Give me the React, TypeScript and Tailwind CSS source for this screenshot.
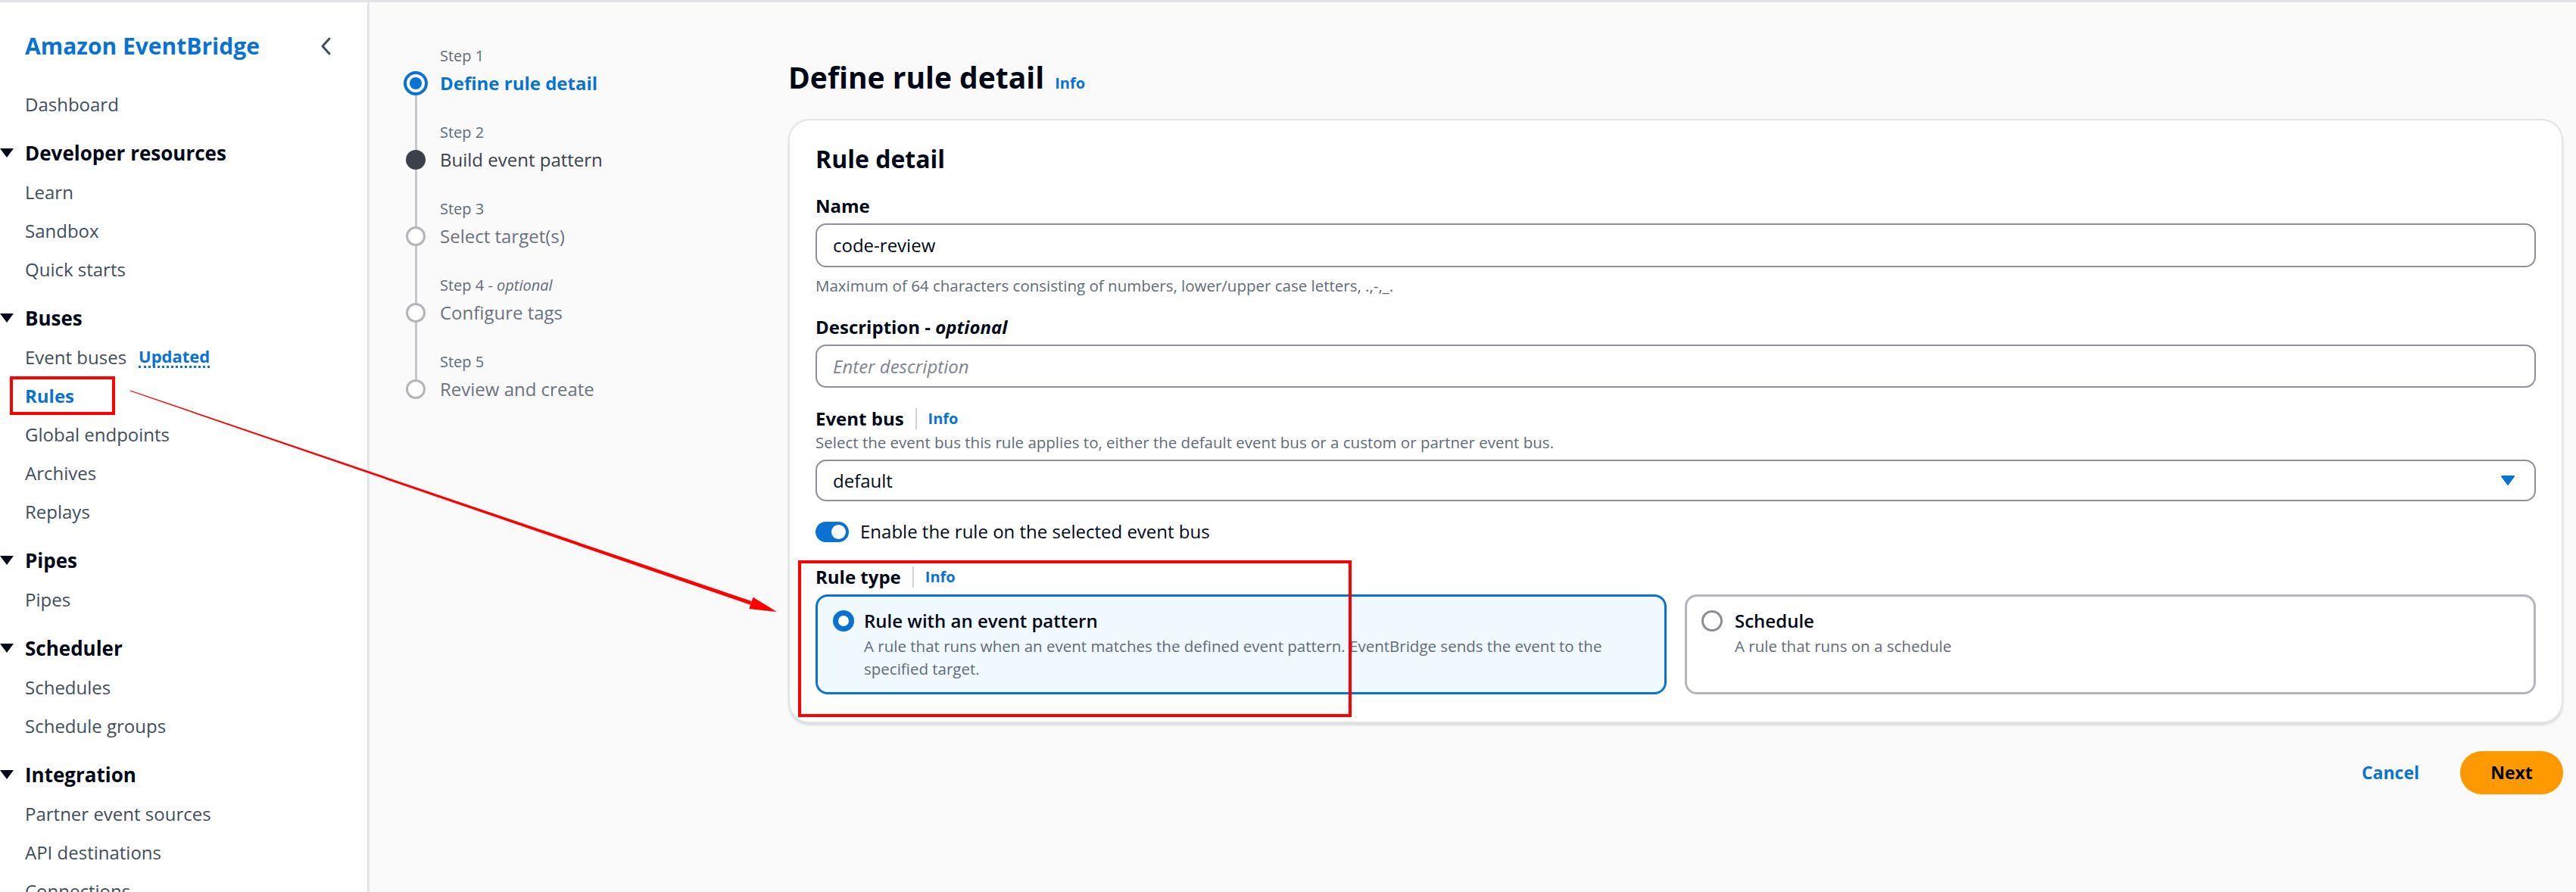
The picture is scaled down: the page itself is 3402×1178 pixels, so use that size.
import React from 'react';

type NavItem = { label: string; badge?: string; active?: boolean };
type NavSection = { title?: string; items: NavItem[] };

const nav: NavSection[] = [
  { items: [{ label: 'Dashboard' }] },
  { title: 'Developer resources', items: [{ label: 'Learn' }, { label: 'Sandbox' }, { label: 'Quick starts' }] },
  {
    title: 'Buses',
    items: [
      { label: 'Event buses', badge: 'Updated' },
      { label: 'Rules', active: true },
      { label: 'Global endpoints' },
      { label: 'Archives' },
      { label: 'Replays' },
    ],
  },
  { title: 'Pipes', items: [{ label: 'Pipes' }] },
  { title: 'Scheduler', items: [{ label: 'Schedules' }, { label: 'Schedule groups' }] },
  { title: 'Integration', items: [{ label: 'Partner event sources' }, { label: 'API destinations' }, { label: 'Connections' }] },
];

type StepState = 'active' | 'next' | 'todo';
const steps: { label: string; optional?: boolean; title: string; state: StepState }[] = [
  { label: 'Step 1', title: 'Define rule detail', state: 'active' },
  { label: 'Step 2', title: 'Build event pattern', state: 'next' },
  { label: 'Step 3', title: 'Select target(s)', state: 'todo' },
  { label: 'Step 4', optional: true, title: 'Configure tags', state: 'todo' },
  { label: 'Step 5', title: 'Review and create', state: 'todo' },
];

function Caret() {
  return (
    <svg width="18" height="13" viewBox="0 0 18 13" className="shrink-0">
      <polygon points="0,0 18,0 9,12" fill="#000716" />
    </svg>
  );
}

function Sidebar() {
  return (
    <aside className="w-[488px] shrink-0 bg-white border-r-[3px] border-[#e4e5e8] pt-[33px]">
      <div className="flex items-center justify-between pl-[33px] pr-[45px] h-[50px]">
        <span className="text-[30px] font-bold text-[#0972d3] leading-[50px]">Amazon EventBridge</span>
        <svg width="18" height="26" viewBox="0 0 18 26">
          <path d="M13 3 L4 13 L13 23" fill="none" stroke="#414d5c" strokeWidth="3" strokeLinecap="round" strokeLinejoin="round" />
        </svg>
      </div>
      <nav className="mt-[26px]">
        {nav.map((section, i) => (
          <div key={i}>
            {section.title && (
              <div className="flex items-center h-[52px] mt-[13px]">
                <span className="w-[33px] flex">
                  <Caret />
                </span>
                <span className="text-[26px] font-bold text-[#000716]">{section.title}</span>
              </div>
            )}
            {section.items.map((item) => (
              <div key={item.label} className="flex items-center h-[51px] pl-[33px]">
                <span className={item.active ? 'text-[24px] font-bold text-[#0972d3]' : 'text-[24px] text-[#414d5c]'}>
                  {item.label}
                </span>
                {item.badge && (
                  <span className="ml-[16px] text-[22px] font-bold text-[#0972d3] leading-[26px] border-b-[3px] border-dotted border-[#0972d3]">
                    {item.badge}
                  </span>
                )}
              </div>
            ))}
          </div>
        ))}
      </nav>
    </aside>
  );
}

function StepIcon({ state }: { state: StepState }) {
  if (state === 'active') {
    return (
      <span className="w-[32px] h-[32px] rounded-full border-[4px] border-[#0972d3] flex items-center justify-center shrink-0">
        <span className="w-[16px] h-[16px] rounded-full bg-[#0972d3]" />
      </span>
    );
  }
  if (state === 'next') {
    return <span className="w-[26px] h-[26px] rounded-full bg-[#3b404b] shrink-0" />;
  }
  return <span className="w-[26px] h-[26px] rounded-full border-[3px] border-[#b4b4bb] bg-white shrink-0" />;
}

function Steps() {
  return (
    <ol className="w-[508px] shrink-0 pt-[53px]">
      {steps.map((step, i) => {
        const first = i === 0;
        const last = i === steps.length - 1;
        const topH = step.state === 'active' ? 'h-[38px]' : 'h-[41px]';
        return (
          <li key={step.label} className="flex h-[101px]">
            <div className="w-[32px] flex flex-col items-center">
              <span className={`${topH} w-[3px] ${first ? 'bg-transparent' : 'bg-[#c6c6cd]'}`} />
              <StepIcon state={step.state} />
              <span className={`flex-1 w-[3px] ${last ? 'bg-transparent' : 'bg-[#c6c6cd]'}`} />
            </div>
            <div className="ml-[16px]">
              <div className="text-[20px] leading-[36px] text-[#5f6b7a]">
                {step.label}
                {step.optional && (
                  <>
                    {' - '}
                    <i>optional</i>
                  </>
                )}
              </div>
              <div
                className={
                  step.state === 'active'
                    ? 'text-[24px] leading-[36px] font-bold text-[#0972d3]'
                    : step.state === 'next'
                      ? 'text-[24px] leading-[36px] text-[#3b404b]'
                      : 'text-[24px] leading-[36px] text-[#6b7280]'
                }
              >
                {step.title}
              </div>
            </div>
          </li>
        );
      })}
    </ol>
  );
}

function InfoLabel({ label }: { label: string }) {
  return (
    <div className="flex items-center h-[32px]">
      <span className="text-[24px] font-bold text-[#000716]">{label}</span>
      <span className="mx-[15px] w-[2px] h-[28px] bg-[#d1d5db]" />
      <span className="text-[20px] font-bold text-[#0972d3]">Info</span>
    </div>
  );
}

function Card() {
  return (
    <div className="rounded-[28px] border-2 border-[#e3e4e7] bg-white px-[34px] pt-[29px] pb-[36px] shadow-[0_3px_3px_rgba(0,7,22,0.12)]">
      <h2 className="text-[32px] font-bold leading-[44px] text-[#000716]">Rule detail</h2>

      <div className="mt-[24px] text-[24px] font-bold leading-[32px]">Name</div>
      <div className="mt-[7px] h-[58px] rounded-[14px] border-2 border-[#8f9099] flex items-center pl-[21px] text-[24px] text-[#000716]">
        code-review
      </div>
      <div className="mt-[10px] text-[20.5px] leading-[28px] text-[#5f6b7a]">
        Maximum of 64 characters consisting of numbers, lower/upper case letters, .,-,_.
      </div>

      <div className="mt-[25px] text-[24px] font-bold leading-[32px]">
        Description - <i>optional</i>
      </div>
      <div className="mt-[7px] h-[57px] rounded-[14px] border-2 border-[#8f9099] flex items-center pl-[21px] text-[24px] italic text-[#7d8490]">
        Enter description
      </div>

      <div className="mt-[25px]">
        <InfoLabel label="Event bus" />
      </div>
      <div className="mt-[1px] text-[20.5px] leading-[28px] text-[#5f6b7a]">
        Select the event bus this rule applies to, either the default event bus or a custom or partner event bus.
      </div>
      <div className="mt-[9px] h-[55px] rounded-[14px] border-2 border-[#8f9099] flex items-center justify-between pl-[21px] pr-[25px] text-[24px] text-[#000716]">
        <span>default</span>
        <svg width="20" height="15" viewBox="0 0 20 15">
          <path d="M2 2 L18 2 L10 13 Z" fill="#0972d3" stroke="#0972d3" strokeWidth="2" strokeLinejoin="round" />
        </svg>
      </div>

      <div className="mt-[24px] flex items-center h-[32px]">
        <span className="w-[44px] h-[27px] rounded-full bg-[#0972d3] flex items-center justify-end pr-[4px]">
          <span className="w-[19px] h-[19px] rounded-full bg-white" />
        </span>
        <span className="ml-[15px] text-[24px] text-[#000716]">Enable the rule on the selected event bus</span>
      </div>

      <div className="mt-[28px]">
        <InfoLabel label="Rule type" />
      </div>
      <div className="mt-[7px] grid grid-cols-2 gap-[24px]">
        <div className="h-[132px] rounded-[16px] border-[3px] border-[#0972d3] bg-[#f0f9ff] flex pl-[20px] pt-[16px]">
          <span className="mt-[2px] w-[28px] h-[28px] rounded-full border-[7px] border-[#0972d3] bg-white shrink-0" />
          <div className="ml-[13px]">
            <div className="text-[24px] font-semibold leading-[32px] text-[#000716]">Rule with an event pattern</div>
            <div className="mt-[2px] text-[20.5px] leading-[30px] text-[#5f6b7a]">
              A rule that runs when an event matches the defined event pattern. EventBridge sends the event to the
              <br />
              specified target.
            </div>
          </div>
        </div>
        <div className="h-[132px] rounded-[16px] border-[3px] border-[#b4b4bb] bg-white flex pl-[19px] pt-[16px]">
          <span className="mt-[2px] w-[28px] h-[28px] rounded-full border-[3px] border-[#8c8c94] bg-white shrink-0" />
          <div className="ml-[16px]">
            <div className="text-[24px] font-semibold leading-[32px] text-[#000716]">Schedule</div>
            <div className="mt-[2px] text-[20.5px] leading-[30px] text-[#5f6b7a]">A rule that runs on a schedule</div>
          </div>
        </div>
      </div>
    </div>
  );
}

function Annotations() {
  return (
    <>
      <div className="absolute left-[13px] top-[494px] w-[139px] h-[51px] border-4 border-[#ff0000] pointer-events-none" />
      <div className="absolute left-[1054px] top-[737px] w-[731px] h-[207px] border-4 border-[#ff0000] pointer-events-none" />
      <svg className="absolute inset-0 pointer-events-none" width="3402" height="1178" viewBox="0 0 3402 1178">
        <polygon points="171.8,513.6 172.2,512.4 992.7,791.0 991.1,795.8" fill="#ff0000" />
        <polygon points="1026,805 994.5,785.8 989.3,801.0" fill="#ff0000" />
      </svg>
    </>
  );
}

export default function App() {
  return (
    <div className="relative w-[3402px] h-[1178px] overflow-hidden flex border-t-[3px] border-[#e3e4e7] bg-[#fafafa] font-['Open_Sans',sans-serif] text-[#000716]">
      <Sidebar />
      <main className="flex-1 flex pl-[45px]">
        <Steps />
        <section className="flex-1 pt-[73px] pr-[17px]">
          <div className="flex items-baseline">
            <h1 className="text-[39px] font-bold leading-[52px] text-[#000716]">Define rule detail</h1>
            <span className="ml-[14px] text-[20px] font-bold text-[#0972d3]">Info</span>
          </div>
          <div className="mt-[29px]">
            <Card />
          </div>
          <div className="mt-[37px] flex items-center justify-end gap-[54px]">
            <span className="text-[23px] font-bold text-[#0972d3]">Cancel</span>
            <span className="w-[136px] h-[57px] rounded-full bg-[#ff9900] flex items-center justify-center text-[23px] font-bold text-[#000716]">
              Next
            </span>
          </div>
        </section>
      </main>
      <Annotations />
    </div>
  );
}
